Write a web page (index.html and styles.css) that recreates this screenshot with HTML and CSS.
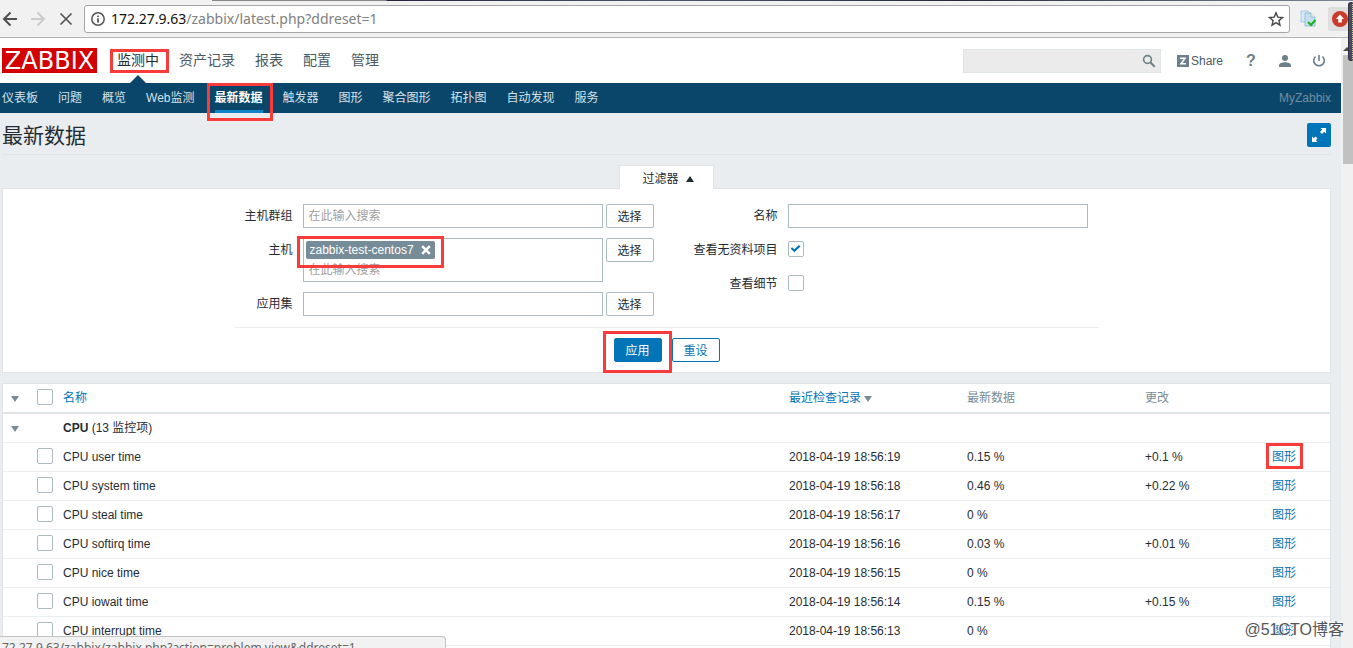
FILE: index.html
```html
<!DOCTYPE html>
<html lang="zh-CN">
<head>
<meta charset="utf-8">
<title>最新数据</title>
<link rel="stylesheet" href="styles.css">
</head>
<body>
<div class="browser-bar">
  <button class="chrome-btn" type="button" aria-label="后退"><svg width="16" height="16" viewBox="0 0 16 16" fill="none" stroke="#505050" stroke-width="2"><path d="M15 8H2.500M8.500 1.500 2 8l6.500 6.500"/></svg></button>
  <button class="chrome-btn" type="button" aria-label="前进"><svg width="16" height="16" viewBox="0 0 16 16" fill="none" stroke="#ccc" stroke-width="2"><path d="M1 8h12.500M7.500 1.500 14 8l-6.500 6.500"/></svg></button>
  <button class="chrome-btn" type="button" aria-label="停止"><svg width="14" height="14" viewBox="0 0 14 14" fill="none" stroke="#505050" stroke-width="1.600"><path d="M1.500 1.500l11 11M12.500 1.500l-11 11"/></svg></button>
  <div class="address">
    <svg width="14" height="14" viewBox="0 0 14 14"><circle cx="7" cy="7" r="6.200" fill="none" stroke="#555" stroke-width="1.500"/><path d="M6.200 6.200h1.600v4.300H6.200zM6.200 3.400h1.600V5H6.200z" fill="#444"/></svg>
    <span class="url"><span class="url-host">172.27.9.63</span>/zabbix/latest.php?ddreset=1</span>
    <svg width="16" height="16" viewBox="0 0 16 16" fill="none" stroke="#484848" stroke-width="1.400"><path d="M8 1.800l1.800 4.300 4.700.4-3.600 3.100 1.100 4.600L8 11.700l-4 2.500 1.100-4.600L1.500 6.500l4.700-.4z"/></svg>
  </div>
  <svg width="16" height="17" viewBox="0 0 16 17"><path d="M1 1h7l2 2v9H1z" fill="#d5eaf6" stroke="#a9cbe0"/><path d="M5 3h6l4 4v9H5z" fill="#c4dff0" stroke="#98bdd5"/><path d="M11 3v4h4" fill="#eef8fd" stroke="#98bdd5"/><path d="M8 12l3 3 4.500-5" fill="none" stroke="#1fb21f" stroke-width="2.200"/></svg>
  <div class="extension"><svg width="16" height="16" viewBox="0 0 16 16"><circle cx="8" cy="8" r="8" fill="#c93a2b"/><path d="M8 3.500 12 8H9.800v3.500H6.200V8H4z" fill="#fff"/></svg></div>
  <div class="edge-widget"></div>
</div>

<div class="viewport">
<div class="page">
  <header class="top">
    <a class="logo" href="#">ZABBIX</a>
    <nav class="main-menu">
      <a class="current marked" href="#">监测中</a>
      <a href="#">资产记录</a>
      <a href="#">报表</a>
      <a href="#">配置</a>
      <a href="#">管理</a>
    </nav>
    <div class="search">
      <input type="text" aria-label="搜索">
      <button type="button" aria-label="搜索"><svg width="14" height="14" viewBox="0 0 14 14" fill="none" stroke="#6c7f8a"><circle cx="5.500" cy="5.500" r="3.900" stroke-width="1.600"/><path d="M8.500 8.500l4.200 4.200" stroke-width="2"/></svg></button>
    </div>
    <a class="share" href="#"><svg width="12" height="12" viewBox="0 0 12 12"><path d="M0 0h12v12H0z" fill="#6c7f8a"/><path d="M3 3.200h5L4 8.800h5" fill="none" stroke="#fff" stroke-width="1.600"/></svg>Share</a>
    <a class="help" href="#">?</a>
    <a class="top-icon" href="#" aria-label="用户"><svg width="14" height="14" viewBox="0 0 14 14" fill="#6c7f8a"><circle cx="7" cy="4" r="3"/><path d="M1 13v-1.500C1 9.300 4 8.300 7 8.300s6 1 6 3.200V13z"/></svg></a>
    <a class="top-icon" href="#" aria-label="退出"><svg width="14" height="14" viewBox="0 0 14 14" fill="none" stroke="#6c7f8a" stroke-width="1.600"><path d="M7 1v6M3.500 2.500a5.300 5.300 0 1 0 7 0"/></svg></a>
  </header>
  <nav class="sub-menu">
    <a href="#">仪表板</a>
    <a href="#">问题</a>
    <a href="#">概览</a>
    <a href="#">Web监测</a>
    <a class="current marked" href="#">最新数据</a>
    <a href="#">触发器</a>
    <a href="#">图形</a>
    <a href="#">聚合图形</a>
    <a href="#">拓扑图</a>
    <a href="#">自动发现</a>
    <a href="#">服务</a>
    <span class="server">MyZabbix</span>
  </nav>

  <main>
    <div class="title-row">
      <h1>最新数据</h1>
      <button class="fullscreen" type="button" aria-label="全屏"><svg width="16" height="16" viewBox="0 0 16 16" fill="#fff"><path d="M9.500 1H15v5.500l-1.800-1.700-2.200 2.200-2-2L11.200 2.800zM1 15V9.500l1.700 1.700L4.500 9.400l2 2-1.700 1.800L6.500 15z"/></svg></button>
    </div>

    <div class="tab-row"><button class="filter-tab" type="button">过滤器<span class="tri up"></span></button></div>
    <form class="filter">
      <div class="columns">
        <div class="column left">
          <div class="row"><label for="groups">主机群组</label><input class="text" id="groups" type="text" placeholder="在此输入搜索"><button class="btn" type="button">选择</button></div>
          <div class="row"><label for="hosts">主机</label>
            <div class="multiselect">
              <span class="chip marked">zabbix-test-centos7<button type="button" aria-label="移除"><svg width="10" height="10" viewBox="0 0 10 10" stroke="#fff" stroke-width="2.600"><path d="M1.200 1.200l7.600 7.600M8.800 1.200 1.200 8.800"/></svg></button></span>
              <input id="hosts" type="text" placeholder="在此输入搜索">
            </div><button class="btn" type="button">选择</button></div>
          <div class="row"><label for="app">应用集</label><input class="text" id="app" type="text"><button class="btn" type="button">选择</button></div>
        </div>
        <div class="column right">
          <div class="row"><label for="name">名称</label><input class="text" id="name" type="text"></div>
          <div class="row"><label for="nodata">查看无资料项目</label><input id="nodata" type="checkbox" checked></div>
          <div class="row"><label for="details">查看细节</label><input id="details" type="checkbox"></div>
        </div>
      </div>
      <div class="actions">
        <span class="marked apply"><button class="btn primary" type="button">应用</button></span>
        <button class="btn alt" type="button">重设</button>
      </div>
    </form>

    <table class="list">
      <colgroup><col class="c-arrow"><col class="c-check"><col><col class="c-data"><col class="c-data"><col class="c-change"><col class="c-graph"></colgroup>
      <thead>
        <tr><th><span class="tri down"></span></th><th><input type="checkbox" aria-label="全选"></th><th><a href="#">名称</a></th><th><a href="#">最近检查记录<span class="tri sort"></span></a></th><th>最新数据</th><th>更改</th><th></th></tr>
      </thead>
      <tbody>
        <tr><td><span class="tri down"></span></td><td></td><td colspan="5"><b>CPU</b> (13 监控项)</td></tr>
        <tr><td></td><td><input type="checkbox" aria-label="CPU user time"></td><td>CPU user time</td><td>2018-04-19 18:56:19</td><td>0.15 %</td><td>+0.1 %</td><td><a class="marked" href="#">图形</a></td></tr>
        <tr><td></td><td><input type="checkbox" aria-label="CPU system time"></td><td>CPU system time</td><td>2018-04-19 18:56:18</td><td>0.46 %</td><td>+0.22 %</td><td><a href="#">图形</a></td></tr>
        <tr><td></td><td><input type="checkbox" aria-label="CPU steal time"></td><td>CPU steal time</td><td>2018-04-19 18:56:17</td><td>0 %</td><td></td><td><a href="#">图形</a></td></tr>
        <tr><td></td><td><input type="checkbox" aria-label="CPU softirq time"></td><td>CPU softirq time</td><td>2018-04-19 18:56:16</td><td>0.03 %</td><td>+0.01 %</td><td><a href="#">图形</a></td></tr>
        <tr><td></td><td><input type="checkbox" aria-label="CPU nice time"></td><td>CPU nice time</td><td>2018-04-19 18:56:15</td><td>0 %</td><td></td><td><a href="#">图形</a></td></tr>
        <tr><td></td><td><input type="checkbox" aria-label="CPU iowait time"></td><td>CPU iowait time</td><td>2018-04-19 18:56:14</td><td>0.15 %</td><td>+0.15 %</td><td><a href="#">图形</a></td></tr>
        <tr><td></td><td><input type="checkbox" aria-label="CPU interrupt time"></td><td>CPU interrupt time</td><td>2018-04-19 18:56:13</td><td>0 %</td><td></td><td><a href="#">图形</a></td></tr>
        <tr><td colspan="7"></td></tr>
      </tbody>
    </table>
  </main>
</div>
<div class="scrollbar"><span class="tri scroll-up"></span><div class="thumb"></div></div>
<div class="status">72.27.9.63/zabbix/zabbix.php?action=problem.view&amp;ddreset=1</div>
<div class="watermark">@51CTO博客</div>
</div>
</body>
</html>
```
FILE: styles.css
```css
* { box-sizing: border-box; }

body {
  margin: 0;
  height: 100vh;
  display: flex;
  flex-direction: column;
  overflow: hidden;
  background: #e9edf0;
  color: #1f2c33;
  font: 12px/18px "Liberation Sans", "Noto Sans CJK SC", sans-serif;
}

a { color: #0275b8; text-decoration: none; }
button, input { font: inherit; color: inherit; }
button { padding: 0; border: 0; background: none; }
svg { display: block; flex: none; }

/* Red highlight frames drawn over the interface */
.marked { position: relative; }
.marked::before {
  content: "";
  position: absolute;
  z-index: 2;
  inset: var(--mark);
  border: 3px solid #fb3a3a;
  pointer-events: none;
}

/* Browser toolbar */
.browser-bar {
  position: relative;
  flex: none;
  display: flex;
  align-items: center;
  gap: 10px;
  height: 38px;
  padding-left: 2px;
  background: #f2f1f2;
  border-bottom: 1px solid #b4b4b4;
}
.browser-bar::before {
  content: "";
  position: absolute;
  top: 0;
  left: 212px;
  right: 0;
  height: 1px;
  background: linear-gradient(90deg, #88868a 174px, #25243c 175px, #4b566c 40%, #26283a 65%, #7c8798);
}
.chrome-btn {
  display: flex;
  justify-content: center;
  width: 16px;
}
.chrome-btn + .chrome-btn { margin-left: 2px; }
.address {
  flex: 1;
  display: flex;
  align-items: center;
  gap: 6px;
  height: 28px;
  padding: 0 5px 0 6px;
  background: #fff;
  border: 1px solid #a5a5a5;
  border-radius: 3px;
}
.url {
  flex: 1;
  color: #808080;
  font: 14px/20px "Noto Sans", sans-serif;
}
.url-host { color: #111; }
.extension {
  display: flex;
  align-items: center;
  width: 25px;
  height: 24px;
  margin-left: 2px;
  padding-left: 4px;
  background: #dedede;
  border-radius: 2px;
}
.edge-widget {
  position: absolute;
  z-index: 3;
  top: 2px;
  right: 0;
  width: 5px;
  height: 59px;
  background: #4a4a5c;
  border: 1px solid #303040;
  border-right: 1px dotted #d0d8a0;
  border-radius: 3px 0 0 3px;
}

/* Frame */
.viewport {
  position: relative;
  flex: 1;
  min-height: 0;
  display: flex;
  overflow: hidden;
}
.page { flex: 1; min-width: 0; }
.scrollbar {
  width: 12px;
  padding: 9px 0 0 2px;
  background: #f1f1f1;
}
.thumb {
  height: 109px;
  margin-top: 4px;
  background: #c1c1c1;
}

/* Header */
.top {
  display: flex;
  align-items: center;
  height: 45px;
  padding: 0 15px 0 2px;
  background: #fff;
}
.logo {
  width: 95px;
  height: 25px;
  background: #d40000;
  color: #fff;
  font: 24px/26px "DejaVu Sans", sans-serif;
  text-align: center;
}
.main-menu {
  flex: 1;
  display: flex;
  gap: 20px;
  margin-left: 20px;
  font-size: 14px;
  line-height: 45px;
}
.main-menu a { color: #4b5a63; }
.main-menu .current { color: #1f2c33; --mark: 11px -10px 10px -7px; }
.main-menu .current::after {
  content: "";
  position: absolute;
  bottom: 0;
  left: 13px;
  border: 8px solid transparent;
  border-top: 0;
  border-bottom-color: #0a466a;
}
.search {
  display: flex;
  align-items: center;
  width: 198px;
  height: 24px;
  margin-right: 16px;
  padding-right: 4px;
  background: #ebebeb;
  border: 1px solid #dfe4e7;
}
.search input {
  flex: 1;
  min-width: 0;
  border: 0;
  background: none;
}
.share {
  display: flex;
  align-items: center;
  gap: 2px;
  margin-right: 23px;
  color: #4b5a63;
}
.help {
  width: 9px;
  color: #6c7f8a;
  font: bold 16px/20px "Liberation Sans", sans-serif;
}
.top-icon { margin-left: 20px; }
.help + .top-icon { margin-left: 23px; }

.sub-menu {
  display: flex;
  gap: 20px;
  height: 30px;
  padding: 0 10px 0 2px;
  background: #0a466a;
  line-height: 30px;
}
.sub-menu a { color: #d5e1e8; }
.sub-menu .current {
  border-bottom: 3px solid #0f84c8;
  color: #fff;
  font-weight: bold;
  --mark: 0 -10px -11px -8px;
}
.server { margin-left: auto; color: #6f8fa3; }

/* Title */
main { padding: 0 10px 0 2px; }
.title-row {
  display: flex;
  align-items: center;
  justify-content: space-between;
  height: 42px;
  padding-top: 2px;
  border-bottom: 1px solid #dfe4e7;
}
h1 {
  margin: 0;
  padding-top: 2px;
  font-size: 21px;
  font-weight: normal;
  line-height: 28px;
}
.fullscreen {
  display: grid;
  place-items: center;
  width: 24px;
  height: 24px;
  background: #0275b8;
  border-radius: 2px;
}

/* Filter */
.tab-row { display: flex; justify-content: center; padding-top: 10px; }
.filter-tab {
  position: relative;
  display: flex;
  align-items: center;
  gap: 7px;
  height: 24px;
  margin-bottom: -1px;
  padding: 3px 19px 0 22px;
  background: #fff;
  border: 1px solid #dfe4e7;
  border-bottom: 0;
}
.tri { display: inline-block; border: 4px solid transparent; }
.tri.up { border-top: 0; border-bottom: 6px solid #1f2c33; }
.tri.down { border-top: 6px solid #768d99; border-bottom: 0; }
.tri.sort { margin-left: 3px; border-top: 6px solid #768d99; border-bottom: 0; }
.tri.scroll-up { display: block; width: 8px; border-top: 0; border-bottom-color: #505050; }

.filter {
  padding: 15px 0 10px;
  background: #fff;
  border: 1px solid #dfe4e7;
}
.columns {
  display: flex;
  justify-content: space-between;
  width: 864px;
  max-width: 100%;
  margin: 0 auto;
  padding: 0 11px 11px 0;
  border-bottom: 1px solid #ebeef0;
}
.column { display: flex; flex-direction: column; gap: 10px; }
.row { display: flex; align-items: flex-start; }
.row label {
  margin-right: 10px;
  line-height: 24px;
  text-align: right;
}
.left label { width: 58px; }
.right label { width: 100px; }
.left .btn { margin-left: 3px; }
.right input[type=checkbox] { margin-top: 3px; }
.text, .multiselect {
  width: 300px;
  background: #fff;
  border: 1px solid #acbbc2;
}
.text { height: 24px; padding: 0 5px; }
::placeholder { color: #a0a0a0; opacity: 1; }
.multiselect { height: 44px; padding: 2px; }
.multiselect input {
  display: block;
  width: 100%;
  height: 22px;
  padding: 0 3px;
  border: 0;
  background: none;
}
.chip {
  display: flex;
  align-items: center;
  gap: 7px;
  width: max-content;
  height: 18px;
  padding: 0 4px;
  background: #768d99;
  border-radius: 2px;
  color: #fff;
  --mark: -5px -9px -9px -9px;
}
.btn {
  width: 48px;
  height: 24px;
  padding-top: 2px;
  background: #fff;
  border: 1px solid #acbbc2;
  border-radius: 2px;
}
.primary { background: #0275b8; border-color: #0275b8; color: #fff; }
.alt { border-color: #0275b8; color: #0275b8; }
.actions {
  display: flex;
  justify-content: center;
  gap: 10px;
  padding-top: 10px;
}
.apply { --mark: -7px -10px -11px -11px; }
.apply .btn { display: block; }

input[type=checkbox] {
  appearance: none;
  position: relative;
  display: block;
  width: 16px;
  height: 16px;
  margin: 0;
  background: #fff;
  border: 1px solid #acbbc2;
  border-radius: 2px;
}
input[type=checkbox]:checked::after {
  content: "";
  position: absolute;
  top: 3px;
  left: 2px;
  width: 10px;
  height: 8px;
  background: #0275b8;
  clip-path: polygon(0 45%, 16% 28%, 38% 52%, 84% 0, 100% 18%, 38% 92%);
}

/* Items */
.list {
  width: 100%;
  margin-top: 10px;
  table-layout: fixed;
  border-collapse: separate;
  border-spacing: 0;
  background: #fff;
  border: 1px solid #dfe4e7;
}
.c-arrow { width: 29px; }
.c-check { width: 26px; }
.c-data { width: 178px; }
.c-change { width: 127px; }
.c-graph { width: 63px; }
th, td {
  height: 29px;
  padding: 0 5px;
  border-bottom: 1px solid #ebeef0;
  text-align: left;
  vertical-align: middle;
  white-space: nowrap;
}
td input[type=checkbox], th input[type=checkbox] { margin-bottom: 2px; }
th {
  height: 30px;
  border-bottom: 2px solid #dfe4e7;
  color: #768d99;
  font-weight: normal;
}
th:first-child, td:first-child { padding-left: 8px; }
td a { display: inline-block; --mark: -5px -7px -3px -6px; }

/* Overlays */
.status {
  position: absolute;
  z-index: 3;
  left: 0;
  bottom: 0;
  width: 446px;
  height: 12px;
  padding: 2px 2px 0;
  overflow: hidden;
  background: #f2f2f2;
  border: 1px solid #c4c4c4;
  border-width: 1px 1px 0 0;
  border-radius: 0 4px 0 0;
  color: #666;
  font: 12px/18px "Noto Sans", sans-serif;
}
.watermark {
  position: absolute;
  z-index: 3;
  right: 9px;
  bottom: 8px;
  color: #555;
  font-size: 16px;
  line-height: 20px;
  text-shadow: 1px 1px 1px #fff, -1px -1px 1px #fff;
}
```
